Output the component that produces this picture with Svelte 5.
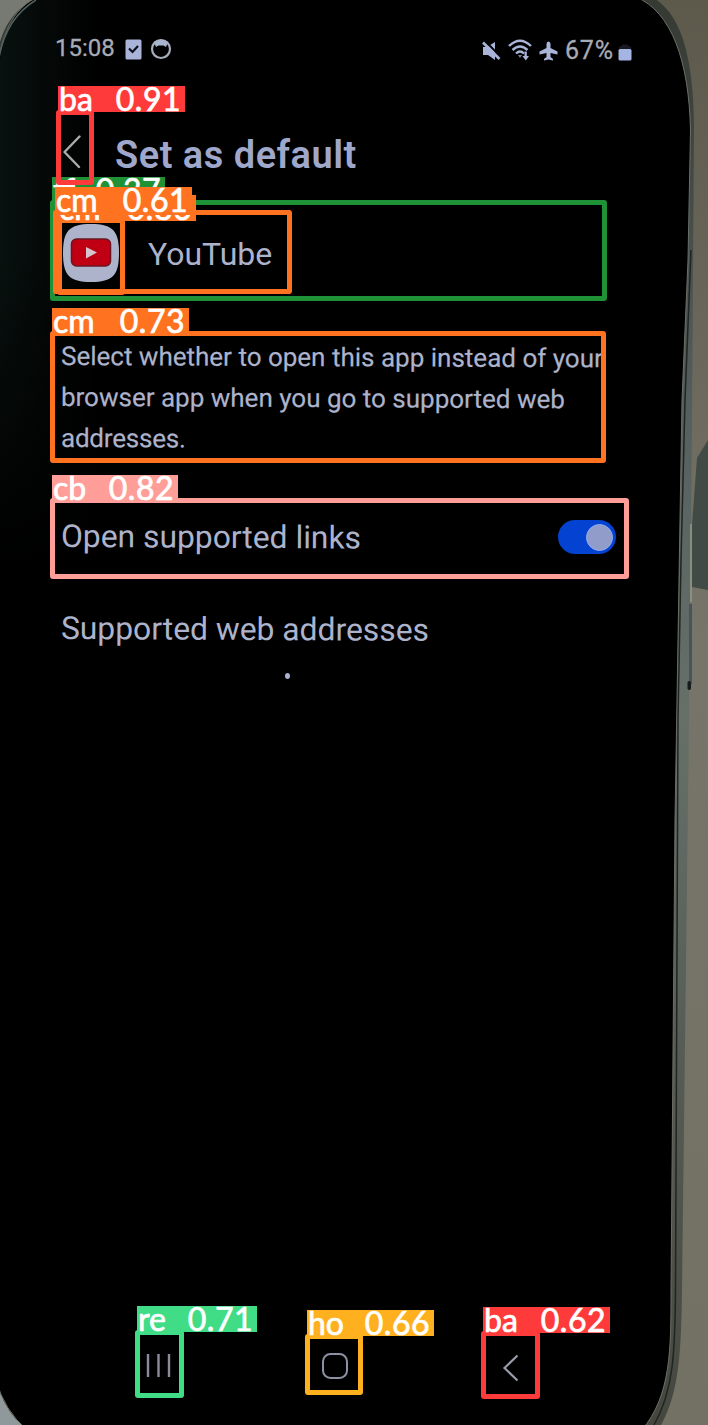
<script>
  const detections = [
    { cls: 'tf', score: '0.37', color: '#1f9136', box: [50, 200, 557, 101], label: [52, 177, 113] },
    { cls: 'ba', score: '0.91', color: '#ff3a3a', box: [56, 110, 38, 75], label: [58, 86, 127] },
    { cls: 'cm', score: '0.86', color: '#ff7320', box: [57, 218, 68, 77], label: [58, 195, 138] },
    { cls: 'cm', score: '0.61', color: '#ff7320', box: [53, 210, 239, 84], label: [55, 187, 137] },
    { cls: 'cm', score: '0.73', color: '#ff7320', box: [50, 331, 556, 132], label: [52, 308, 137] },
    { cls: 'cb', score: '0.82', color: '#ff9e98', box: [50, 498, 579, 81], label: [52, 475, 126] },
    { cls: 're', score: '0.71', color: '#40dc86', box: [135, 1330, 49, 68], label: [137, 1306, 120] },
    { cls: 'ho', score: '0.66', color: '#ffb01e', box: [305, 1334, 58, 61], label: [307, 1310, 127] },
    { cls: 'ba', score: '0.62', color: '#ff3a3a', box: [481, 1331, 59, 68], label: [483, 1307, 127] }
  ];
</script>

<div class="page">
  <svg class="photo" width="708" height="1425" viewBox="0 0 708 1425">
    <defs>
      <linearGradient id="wall" x1="0" y1="0" x2="0" y2="1">
        <stop offset="0" stop-color="#5d594b" />
        <stop offset="0.25" stop-color="#6b675b" />
        <stop offset="0.45" stop-color="#77756a" />
        <stop offset="1" stop-color="#737163" />
      </linearGradient>
      <linearGradient id="rim" x1="0" y1="0" x2="0" y2="1">
        <stop offset="0" stop-color="#343a32" />
        <stop offset="0.3" stop-color="#566060" />
        <stop offset="0.5" stop-color="#667069" />
        <stop offset="1" stop-color="#45473f" />
      </linearGradient>
      <linearGradient id="glare" x1="0" x2="1">
        <stop offset="0" stop-color="#08110f" />
        <stop offset="1" stop-color="#000" />
      </linearGradient>
      <linearGradient id="fade" x1="0" y1="0" x2="0" y2="1">
        <stop offset="0" stop-color="#000" stop-opacity="0" />
        <stop offset="1" stop-color="#000" />
      </linearGradient>
    </defs>
    <rect width="708" height="1425" fill="url(#wall)" />
    <path d="M0 0H40L0 50Z" fill="#777973" />
    <path d="M708 440 697 458 692 525V587L708 590Z" fill="#424a46" />
    <path d="M-4 60C2 20 20 4 44 -3H652C682 14 693 58 694 125L692 420 689 720 682 1290C681 1350 680 1395 658 1430H15Q-2 1410 -4 1380Z" fill="url(#rim)" />
    <path d="M0 1392Q8 1414 22 1425H0Z" fill="#8f989b" />
    <path d="M-4 75C2 25 18 6 38 -3H636C672 12 689 62 690.500 130L688 260 682 400 678 640 675 820 671 1290C671 1350 671 1395 642 1430H27Q4 1410 -4 1380Z" fill="#000" stroke="#6b6e65" stroke-width="1" />
    <path d="M0 60C6 22 22 6 40 0H96V560H0Z" fill="url(#glare)" />
    <rect y="250" width="96" height="311" fill="url(#fade)" />
    <path d="M-1 58Q6 18 36 0" fill="none" stroke="#52615f" stroke-width="1.5" />
    <path d="M691 250 685 400 681 560 678 720 675.500 1290C675 1350 674 1390 654 1425" fill="none" stroke="#1f2520" stroke-width="1.500" />
    <path d="M691 524V602" stroke="#969888" stroke-width="1.5" />
    <path d="M690.500 604V684" stroke="#4a5456" stroke-width="3" />
    <rect x="687.500" y="681" width="3.500" height="9" rx="1.700" fill="#151b1a" />
  </svg>

  <main>
    <header class="status">
      <span class="clock">15:08</span>
      <svg class="tick" width="17" height="21" viewBox="0 0 17 21">
        <rect x="0.500" y="0.500" width="16" height="20" rx="1.500" fill="#a9b4d8" />
        <path d="M4 9.500 7.500 13 13 7" fill="none" stroke="#0b0f1c" stroke-width="2.200" />
      </svg>
      <svg class="ring" width="22" height="22" viewBox="0 0 22 22">
        <circle cx="11" cy="11" r="9" fill="none" stroke="#a8adbb" stroke-width="2.200" />
        <path d="M4 4Q11 -1 18 4L16 9 13.500 7.500H8.500L6 9Z" fill="#a9b4d0" />
      </svg>
      <svg class="mute" width="19" height="20" viewBox="0 0 19 20">
        <path d="M1 6H5L13 1V19L6 14H1Z" fill="#a9b4d8" />
        <path d="M3 0 19 16" stroke="#000" stroke-width="2" />
        <path d="M1 1.500 17.500 18" stroke="#a9b4d8" stroke-width="2.600" />
      </svg>
      <svg class="wifi" width="25" height="23" viewBox="0 0 25 23">
        <g fill="none" stroke="#a9b4d8" stroke-width="2.400">
          <path d="M1 7Q12 -3.500 23 7" />
          <path d="M4.500 11Q12 4 19.500 11" />
          <path d="M8 14.500Q12 10.500 16 14.500" />
        </g>
        <path d="M10 16 12 19 14 16Z" fill="#777f97" />
        <path d="M16.500 12.500H18.800V17H21L17.800 21.500 14.400 17H16.500Z" fill="#a9b4d8" />
      </svg>
      <svg class="plane" width="19" height="20" viewBox="0 0 19 20">
        <path d="M9.500 0.500Q11.500 0.500 11.500 3V7L18.500 10.500V13.500L11.500 12V16L14 18V19.500L9.500 18.500 5 19.500V18L7.500 16V12L0.500 13.500V10.500L7.500 7V3Q7.500 0.500 9.500 0.500Z" fill="#a9b4d8" />
      </svg>
      <span class="percent">67%</span>
      <svg class="battery" width="14" height="18" viewBox="0 0 14 18">
        <path d="M1 7V4.500Q1 3 3 3H4V1.500H10V3H11Q13 3 13 4.500V7Z" fill="#171a21" />
        <rect x="0.500" y="6" width="13" height="11.500" rx="1.500" fill="#a4b5e3" />
      </svg>
    </header>

    <div class="heading">
      <svg width="20" height="34" viewBox="0 0 20 34">
        <path d="M17.500 1.500 2.500 17 17 32" fill="none" stroke="#a9abad" stroke-width="2.400" stroke-linecap="round" stroke-linejoin="round" />
      </svg>
      <h1>Set as default</h1>
    </div>

    <div class="app">
      <svg width="58" height="60" viewBox="0 0 58 60">
        <path d="M29 1C51 1 57 8 57 30S51 59 29 59 1 52 1 30 7 1 29 1Z" fill="#adb3ca" />
        <rect x="9.500" y="16" width="39" height="27" rx="5" fill="#c00012" stroke="#6c1421" stroke-width="1.500" />
        <path d="M24 24 35 29.500 24 35.500Z" fill="#d5c5cf" />
      </svg>
      <span>YouTube</span>
    </div>

    <p class="hint">
      <span>Select whether to open this app instead of your</span>
      <span>browser app when you go to supported web</span>
      <span class="last">addresses.</span>
    </p>

    <div class="row">
      <span class="open">Open supported links</span>
      <span class="toggle"><i></i></span>
    </div>
    <div class="row second"><span>Supported web addresses</span></div>
    <div class="speck"></div>

    <nav>
      <svg width="28" height="28" viewBox="0 0 28 28">
        <path d="M3 2V25M13.500 2V25M24 2V25" stroke="#8b8b9d" stroke-width="2.400" />
      </svg>
      <svg width="28" height="28" viewBox="0 0 28 28">
        <rect x="2" y="2" width="24" height="24" rx="7.500" fill="none" stroke="#8d91a3" stroke-width="2" />
      </svg>
      <svg width="18" height="28" viewBox="0 0 18 28">
        <path d="M15.500 1.500 2.500 14 15.500 26.500" fill="none" stroke="#969aab" stroke-width="2.200" />
      </svg>
    </nav>
  </main>

  {#each detections as d}
    <div class="box" style="left:{d.box[0]}px;top:{d.box[1]}px;width:{d.box[2]}px;height:{d.box[3]}px;border-color:{d.color}"></div>
    <div class="label" style="left:{d.label[0]}px;top:{d.label[1]}px;width:{d.label[2]}px;background:{d.color}">
      <span>{d.cls}</span><span class="score">{d.score}</span>
    </div>
  {/each}
</div>

<style>
  :global(body) { margin: 0; background: #000; }
  .page { position: relative; width: 708px; height: 1425px; overflow: hidden; font-family: Roboto, sans-serif; color: #acb3cb; }
  .photo { position: absolute; inset: 0; display: block; }
  main { position: relative; display: flex; flex-direction: column; height: 1425px; box-sizing: border-box; padding: 33px 76px 42px 55px; }
  span, h1 { white-space: nowrap; }
  svg { flex: none; display: block; }

  .status { display: flex; align-items: center; height: 32px; font-size: 24px; line-height: 32px; color: #a7abb5; -webkit-text-stroke: 0.3px #a7abb5; }
  .clock { width: 60px; margin-right: 10px; padding-bottom: 2px; }
  .tick { margin-right: 8px; }
  .mute { margin: 4px 7px 0 auto; }
  .wifi { margin: 3px 6px 0 0; }
  .plane { margin: 4px 7px 0 0; }
  .percent { width: 50px; margin-top: 4px; font-size: 25px; letter-spacing: 0.8px; }
  .battery { margin: 5px 0 0 3px; }

  .heading { display: flex; align-items: center; height: 40px; margin-top: 67px; padding-left: 7px; gap: 33px; }
  h1 { margin: 5px 0 0; font-size: 38px; line-height: 40px; font-weight: 600; color: #9fa8ca; letter-spacing: 0.5px; }

  .app { display: flex; align-items: center; height: 60px; margin-top: 51px; padding-left: 7px; gap: 28px; font-size: 32px; }
  .app span { margin-top: 2px; }

  .hint { display: flex; flex-direction: column; margin: 53px 0 0; padding-left: 6px; font-size: 26px; line-height: 41px; }
  .hint span { transform-origin: 0 50%; transform: rotate(0.25deg); -webkit-text-stroke: 0.2px #acb3cb; }
  .hint .last { letter-spacing: -0.2px; }

  .row { display: flex; align-items: center; justify-content: space-between; height: 40px; margin-top: 58px; padding: 0 15px 0 6px; font-size: 31.800px; }
  .row span { transform-origin: 0 50%; transform: rotate(0.3deg); }
  .row .open { margin-top: -3px; }
  .second { margin-top: 51px; margin-bottom: 2px; }
  .row .toggle { display: flex; align-items: center; justify-content: flex-end; box-sizing: border-box; width: 58px; height: 34px; margin-right: 1px; padding-right: 3px; border-radius: 17px; background: #0442d2; transform: none; }
  .toggle i { width: 25px; height: 25px; border: 1px solid #94adf0; border-radius: 50%; background: #929ccb; }
  .speck { width: 5px; height: 6px; margin: 23px 0 0 230px; border-radius: 50%; background: #a5b5d0; }

  nav { display: flex; align-items: center; margin: auto 0 0 90px; height: 34px; }
  nav svg:nth-child(2) { margin-left: 148px; }
  nav svg:nth-child(3) { margin: 4px 0 0 153px; }

  .box { position: absolute; box-sizing: border-box; border: 5px solid; border-radius: 3px; }
  .label { position: absolute; display: flex; justify-content: space-between; box-sizing: border-box; height: 26px; padding: 0 4px 0 1px; font: 400 32px/26px Lato, sans-serif; color: #fff; -webkit-text-stroke: 0.7px #fff; }
  .score { letter-spacing: 0.5px; }
</style>
